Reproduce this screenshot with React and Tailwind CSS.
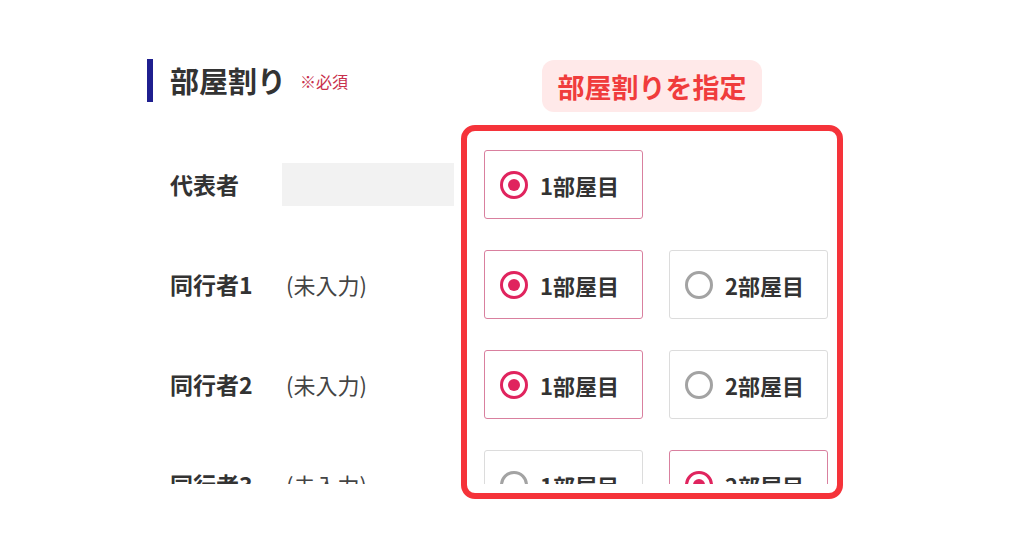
import React from "react";

function Radio({ selected }) {
  return selected ? (
    <span className="flex h-[28px] w-[28px] shrink-0 items-center justify-center rounded-full border-[3px] border-[#e0245e]">
      <span className="h-[12px] w-[12px] rounded-full bg-[#e0245e]" />
    </span>
  ) : (
    <span className="h-[28px] w-[28px] shrink-0 rounded-full border-[3px] border-[#a3a3a3]" />
  );
}

function Option({ label, selected }) {
  return (
    <div
      className={
        "flex h-[69px] w-[159px] items-center gap-[12px] rounded-[3px] border bg-white pl-[15px] " +
        (selected ? "border-[#d9809f]" : "border-[#dcdcdc]")
      }
    >
      <Radio selected={selected} />
      <span className="text-[22px] font-bold leading-none text-[#333333]">{label}</span>
    </div>
  );
}

function Row({ name, value, options }) {
  return (
    <div className="flex h-[69px] items-center">
      <div className="w-[112px] text-[23px] font-bold text-[#333333]">{name}</div>
      <div className="flex w-[202px] items-center">
        {value === null ? (
          <div className="h-[43px] w-[172px] bg-[#f2f2f2]" />
        ) : (
          <span className="pl-[4px] text-[22px] text-[#444444]">{value}</span>
        )}
      </div>
      <div className="flex gap-[26px]">
        {options.map((o) => (
          <Option key={o.label} label={o.label} selected={o.selected} />
        ))}
      </div>
    </div>
  );
}

export default function App() {
  return (
    <div
      className="relative h-[538px] w-[1024px] overflow-hidden bg-white"
      style={{ fontFamily: '"Noto Sans CJK JP", "Noto Sans", sans-serif' }}
    >
      <div className="flex items-center pl-[147px] pt-[59px]">
        <div className="h-[43px] w-[6px] bg-[#1f1f8f]" />
        <h2 className="ml-[17px] text-[29px] font-bold leading-none text-[#333333]">部屋割り</h2>
        <span className="ml-[14px] text-[16px] text-[#c8304c]">※必須</span>
      </div>

      <div className="mt-[48px] flex h-[334px] flex-col gap-[31px] overflow-hidden pl-[170px]">
        <Row name="代表者" value={null} options={[{ label: "1部屋目", selected: true }]} />
        <Row
          name="同行者1"
          value="(未入力)"
          options={[
            { label: "1部屋目", selected: true },
            { label: "2部屋目", selected: false },
          ]}
        />
        <Row
          name="同行者2"
          value="(未入力)"
          options={[
            { label: "1部屋目", selected: true },
            { label: "2部屋目", selected: false },
          ]}
        />
        <Row
          name="同行者3"
          value="(未入力)"
          options={[
            { label: "1部屋目", selected: false },
            { label: "2部屋目", selected: true },
          ]}
        />
      </div>

      <div className="absolute left-[542px] top-[60px] flex h-[52px] w-[220px] items-center justify-center rounded-[12px] bg-[#ffe9e9]">
        <span className="text-[27px] font-bold leading-none text-[#f03c3c]">部屋割りを指定</span>
      </div>

      <div className="pointer-events-none absolute left-[461px] top-[125px] h-[374px] w-[382px] rounded-[14px] border-[6px] border-[#f5333a]" />
    </div>
  );
}
